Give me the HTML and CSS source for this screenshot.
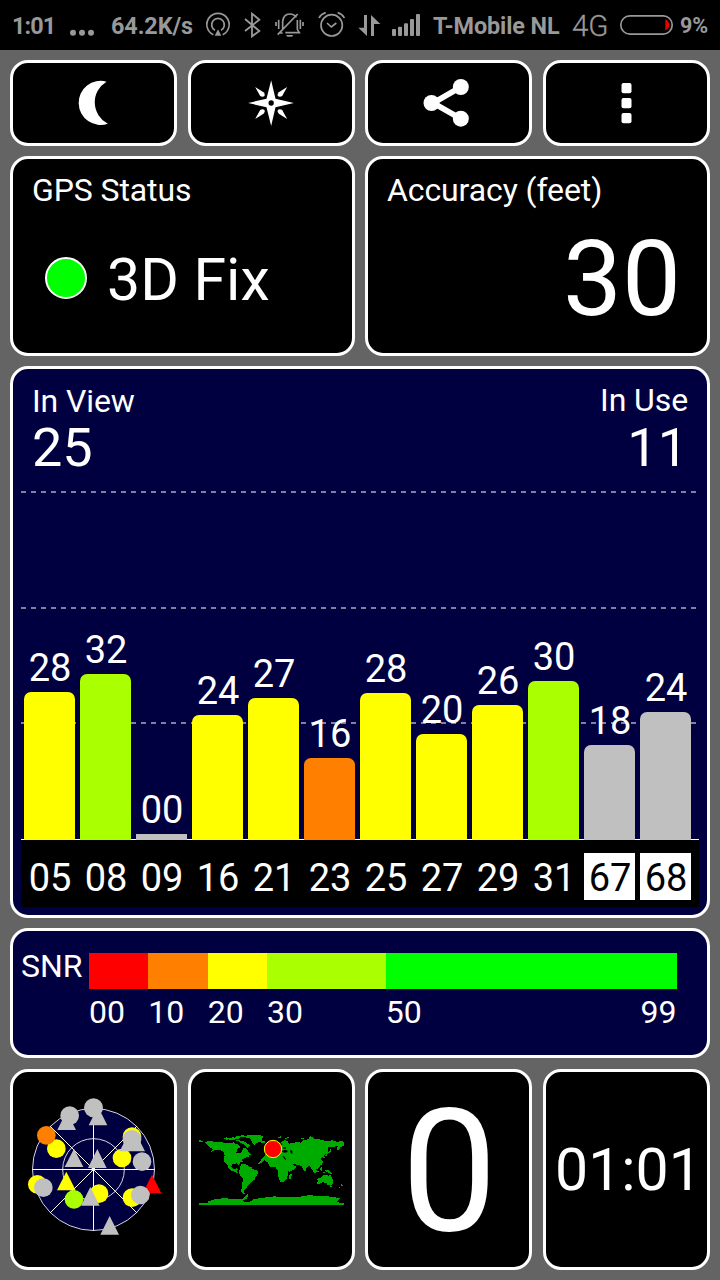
FILE: index.html
```html
<!DOCTYPE html>
<html lang="en">
<head>
<meta charset="utf-8">
<title>GPS Status</title>
<link rel="stylesheet" href="styles.css">
</head>
<body>
<header class="statusbar">
  <span class="sb-clock">1:01</span>
  <svg class="i-dots" viewBox="201 0 90 150"><g fill="#999"><circle cx="219" cy="98" r="9"/><circle cx="246" cy="98" r="9"/><circle cx="273" cy="98" r="9"/></g></svg>
  <span class="sb-rate">64.2K/s</span>
  <svg class="i-sys" viewBox="612 0 690 150">
    <g fill="none" stroke="#999" stroke-width="5">
      <path d="M640 104A33.500 33.500 0 1 1 668 104"/>
      <path d="M645 91A19 19 0 1 1 663 91"/>
      <path d="M735 57L778 93L756 109V41L778 59L735 93" stroke-width="5.500"/>
      <path d="M836 99H848M848 88V64C850 48 857 42 869 42C881 42 886 47 889 52M892 60V88L898 98H856M833 104L893 42"/>
      <path d="M828 66V78M836 59V87M901 59V87M909 66V78"/>
      <circle cx="995" cy="76" r="32"/>
      <path d="M981 69L994 81L1009 69M957 54Q963 42 977 38M1013 38Q1027 42 1033 54"/>
    </g>
    <g fill="#999">
      <path d="M644 107L654 88L664 107Z"/>
      <path d="M858 105H880L876 110H862Z"/>
      <path d="M1092 45H1101V108L1075 83H1092Z"/>
      <path d="M1113 108V45L1141 72H1122V108Z"/>
      <rect x="1176" y="87" width="12" height="21" rx="3"/><rect x="1194" y="80" width="12" height="28" rx="3"/><rect x="1212" y="70" width="12" height="38" rx="3"/><rect x="1230" y="57" width="12" height="51" rx="3"/><rect x="1248" y="42" width="12" height="66" rx="3"/>
    </g>
  </svg>
  <span class="sb-carrier">T-Mobile NL</span>
  <span class="sb-net">4G</span>
  <svg class="i-batt" viewBox="771 0 180 150"><path d="M916 58Q928 64 928 75Q928 86 916 91Z" fill="#e60000"/><rect x="782.500" y="47.500" width="154" height="55" rx="27" fill="none" stroke="#999" stroke-width="5"/></svg>
  <span class="sb-pct">9%</span>
</header>
<main class="board">
  <nav class="row tools">
    <button class="card"><svg class="icon" viewBox="208.500 87 144 144"><path fill="#fff" d="M318 95A66 66 0 1 0 322 221A72 72 0 0 1 318 95Z"/></svg></button>
    <button class="card"><svg class="icon" viewBox="740.500 87 144 144"><g fill="#fff"><path fill-rule="evenodd" d="M813 91L826 146L881 159L826 172L813 228L799 172L744 159L799 146ZM813 151A8 8 0 1 0 813 167A8 8 0 1 0 813 151Z"/><path d="M765 111L790 127Q796 133 793 138Q787 143 780 138Z"/><path d="M861 111L836 127Q830 133 833 138Q839 143 846 138Z"/><path d="M765 207L790 191Q796 185 793 180Q787 175 780 180Z"/><path d="M861 207L836 191Q830 185 833 180Q839 175 846 180Z"/></g></svg></button>
    <button class="card"><svg class="icon" viewBox="193.500 87 144 144"><path d="M301 111L218 159L301 206" fill="none" stroke="#fff" stroke-width="17"/><g fill="#fff"><circle cx="301" cy="111" r="24"/><circle cx="213" cy="159" r="24"/><circle cx="301" cy="206" r="24"/></g></svg></button>
    <button class="card"><svg class="icon" viewBox="724.500 87 144 144"><g fill="#fff"><rect x="783" y="99" width="30" height="31" rx="6"/><rect x="783" y="144" width="30" height="31" rx="6"/><rect x="783" y="189" width="30" height="31" rx="6"/></g></svg></button>
  </nav>
  <section class="row summary">
    <article class="card fix"><h2 class="title">GPS Status</h2><div class="fix-state"><i class="lamp"></i><span>3D Fix</span></div></article>
    <article class="card accuracy"><h2 class="title">Accuracy (feet)</h2><p class="acc-value">30</p></article>
  </section>
  <section class="card navy signals">
    <div class="counts"><div><h2 class="title">In View</h2><p class="count">25</p></div><div class="right"><h2 class="title">In Use</h2><p class="count">11</p></div></div>
    <div class="chart">
      <svg class="grid" viewBox="0 0 678 350"><path d="M0 2H676M0 118H676M0 233H676" stroke="#fff" stroke-opacity=".5" stroke-width="2" stroke-dasharray="5 5"/></svg>
      <div class="bars">
        <div class="col"><span>28</span><i class="yellow" style="height:148px"></i></div>
        <div class="col"><span>32</span><i class="lime" style="height:166px"></i></div>
        <div class="col"><span>00</span><i class="grey flat" style="height:6px"></i></div>
        <div class="col"><span>24</span><i class="yellow" style="height:125px"></i></div>
        <div class="col"><span>27</span><i class="yellow" style="height:142px"></i></div>
        <div class="col"><span>16</span><i class="orange" style="height:82px"></i></div>
        <div class="col"><span>28</span><i class="yellow" style="height:147px"></i></div>
        <div class="col"><span>20</span><i class="yellow" style="height:106px"></i></div>
        <div class="col"><span>26</span><i class="yellow" style="height:135px"></i></div>
        <div class="col"><span>30</span><i class="lime" style="height:159px"></i></div>
        <div class="col"><span>18</span><i class="grey" style="height:95px"></i></div>
        <div class="col"><span>24</span><i class="grey" style="height:128px"></i></div>
      </div>
    </div>
    <div class="ids"><span>05</span><span>08</span><span>09</span><span>16</span><span>21</span><span>23</span><span>25</span><span>27</span><span>29</span><span>31</span><span class="glonass">67</span><span class="glonass">68</span></div>
  </section>
  <section class="card navy snr">
    <span class="snr-name">SNR</span>
    <div class="scale">
      <div class="strip"><i class="red s10"></i><i class="orange s10"></i><i class="yellow s10"></i><i class="lime s20"></i><i class="green s49"></i></div>
      <div class="ticks"><span class="s10">00</span><span class="s10">10</span><span class="s10">20</span><span class="s20">30</span><span class="s49 last"><b>50</b><b>99</b></span></div>
    </div>
  </section>
  <section class="row bottom">
    <article class="card">
      <svg class="sky" viewBox="9 36 483 585">
        <circle cx="250.500" cy="328.500" r="183" fill="#000040"/>
        <g fill="none" stroke="#fff" stroke-width="3"><circle cx="250.500" cy="328.500" r="183" stroke="#d5d5e0"/><circle cx="250.500" cy="328.500" r="92.500" stroke="#d5d5e0"/><path d="M67 328.500H434M250.500 146V512"/><path d="M121 199L380 458M121 458L380 199" shape-rendering="crispEdges"/></g>
        <rect x="245" y="323" width="10" height="10" fill="#fff"/>
        <g fill="#ff0"><circle cx="139" cy="266" r="28"/><circle cx="366" cy="230" r="28"/><circle cx="336" cy="294" r="28"/><circle cx="82" cy="373" r="28"/><circle cx="267" cy="401" r="28"/><circle cx="366" cy="413" r="28"/><path d="M169 335L197 391H141Z"/></g>
        <circle cx="109" cy="226" r="28" fill="#ff8000"/><circle cx="192" cy="418" r="28" fill="#af0"/><path d="M426 344L454 400H398Z" fill="red"/>
        <g fill="#c0c0c0"><circle cx="179" cy="167" r="28"/><path d="M170 154L198 210H142Z"/><circle cx="250.500" cy="143" r="28.500"/><path d="M264 140L292 196H236Z"/><circle cx="366" cy="238" r="28"/><path d="M357 218L385 274H329ZM377 218L405 274H349Z"/><circle cx="396" cy="305" r="28"/><path d="M192 266L220 321H164ZM262 267L290 324H234ZM241 381L269 437H213ZM299 468L327 524H271Z"/><circle cx="100" cy="383" r="28"/><circle cx="391" cy="405" r="28"/></g>
      </svg>
    </article>
    <article class="card world">
      <svg class="map" viewBox="39 42 435 216">
        <g fill="#00ab00" shape-rendering="crispEdges">
          <path d="M39 60h5v4h8v3h-13zM56 66l12-3 28 3 12 1 10 3 26-3 6 5 9 3 3 7-9 6-2 10 10 2 7-6 3-9 8-2 5 6 4 8 7 7-12 4-6 6-9 4-2 7-5 4-1 8-8-7-13 2-3 8 6 7 7-1 4-5 2 6-2 8 5 4 8 2-5 1-13-6-13-4-7-8-4-9-8-8-2-9 2-12-4-11-11-5-11-1-14 6 5-8-8-3z"/>
          <path d="M112 56l10-4 8 4-7 4zM127 54l16-2 9 5-12 4-12-1zM147 50l19-4 14 1-5 3-12 2-7 5-9-2zM160 64l12-2 10 8 10 6-6 8-7-4-4-7-13-5zM151 60h10v4h-10z"/>
          <path d="M169 50l16-4 35-1 12 3-4 8-2 8-13 4-8 6-4-3-9-16-10-2z"/>
          <path d="M225 64l11-1 3 4-7 2-6-1zM155 119l10 2 8 4-6 1-11-5zM180 104l8 2 2 4-7 1z"/>
          <path d="M164 135l5-4 10 1 10 7 8 3 3 5 10 3 6 5-2 9-5 6-3 10-8 3-6 9-8 7-5 8-4 3v9l4 4-9-2-5-7 3-15 3-25-7-5-6-11 2-7z"/>
          <path d="M236 79h7l3 12-10 2zM242 98l18-8 3-11 12-2 9-9 13-9 10 6 1 6 17-2 7-4 12 3 9-8 14-2 7-5 20 5 16 1 6 4 25-2 10 4 17-1 13 4 9-3 6-3v8l-9 2 3 5-15-1-12 5-4 8-6 3-1-8 5-7-18 4-14-1 2 12-6 10-8 4 3 7-2 5-4-7-7 5 8 8-3 9-9 6-6 4-6-1 5 10-5 8-6-7-2-13-7-3-10 5-4 11-5-3-6-13-16-2-5-4-6 1 11 9-8 9-14 6-9-17 4-9-8-1-8-4-9-1-7-7-8 8-9-1-13 2-8-6-7 10-10 1z"/>
          <path d="M246 112l10-5 14-2 5 6 11 2 10-2 6 11 7 14 10-1-3 10-10 11-1 11-5 13-8 6-8 2-5-11-4-16 2-8-6-6-1-6-14 1-8-7-2-11z"/>
          <path d="M310 166l7-5 1 5-6 14-4-4zM349 139l4 4-3 3-3-4zM371 136l7 4 8 13-3 2-8-9zM387 153l15 2-5 2-11-2zM388 138l10-5 3 6-5 9-8-2zM402 143l8-2-2 6 2 6-6-2zM401 121l5 5 4 10-5-5zM417 149l10 1 10 9 1 3-10-3-10-6zM410 157h8v2h-8z"/>
          <path d="M394 177l9-4 8-7 11-2 6 6 4-8 6 12 4 7-1 11-7 5-9-2-5-7-10-1-12 6-5-2 2-7zM432 199h6l-3 4zM465 191l6 5-7 5zM457 203l6-2-4 5zM418 106l4-8 7-3 5-9h3l-4 12-8 3-5 8zM293 57l7-4 4 2-7 4zM300 52l10-2-2 4zM366 54l8-6 9 6-7 3zM275 52l8-3 4 3-7 3zM344 56l8-2 2 3-9 1z"/>
          <path d="M39 249H68L66 244L80 240L93 236L120 235L150 238L171 236L179 227L186 222L184 235L172 240L173 246L191 246L200 239L217 235L240 232L267 229L289 232L318 231L342 230L373 225L396 229L424 229L445 231L461 235L452 245L461 249H474V255H39Z"/>
        </g>
        <g fill="#000"><path d="M291 82h9v4h-9zM286 94l11-5 8 3-1 5-10 1zM312 90l7 3v10l-5-5zM289 108l7 2 5 11-5-3zM274 79l12-10 3 5-8 5z"/></g>
        <circle cx="261" cy="87" r="26" fill="red" stroke="#ff0" stroke-width="3"/>
      </svg>
    </article>
    <article class="card speed">0</article>
    <article class="card time">01:01</article>
  </section>
</main>
</body>
</html>
```

FILE: styles.css
```css
* { box-sizing: border-box; }
body { margin: 0; width: 720px; height: 1280px; overflow: hidden; background: #646464; color: #fff; font-family: Roboto, "Noto Sans", sans-serif; }
h2, p { margin: 0; font-weight: 400; }
i, b { font-style: normal; font-weight: 400; }
svg { display: block; flex: none; }

.statusbar { display: flex; height: 50px; padding-left: 12px; background: #000; color: #999; font-size: 23.4px; font-weight: 700; line-height: 52px; white-space: nowrap; }
.statusbar svg { height: 50px; }
.sb-clock { width: 55px; letter-spacing: -.9px; }
.i-dots { width: 30px; margin-right: 14px; }
.sb-rate { width: 93px; letter-spacing: -.1px; }
.i-sys { width: 230px; margin-right: -1px; }
.sb-carrier { width: 139px; letter-spacing: -.1px; }
.sb-net { width: 45px; font-size: 29.5px; font-weight: 300; -webkit-text-stroke: .3px #999; }
.i-batt { width: 60px; }
.sb-pct { margin-left: 3px; font-size: 21.5px; }

.board { display: flex; flex-direction: column; padding: 10px 10px 10px 10px; }
.row { display: grid; grid-template-columns: repeat(4, 167px); justify-content: space-between; }
.card { min-width: 0; border: 3px solid #fff; border-radius: 18px; background: #000; color: #fff; overflow: hidden; }
.navy { background: #000040; }
.title { font-size: 32px; line-height: 38px; letter-spacing: -.1px; }

.tools { height: 86px; margin-bottom: 10px; }
.tools .card { display: flex; align-items: center; justify-content: center; padding: 0; }
.icon { width: 48px; height: 48px; overflow: visible; }

.summary { grid-template-columns: 345px 345px; height: 200px; margin-bottom: 10px; }
.summary .card { padding: 12px 19px; }
.fix-state { display: flex; align-items: center; gap: 20px; margin-top: 36px; padding-left: 13px; font-size: 59px; line-height: 70px; }
.lamp { width: 42px; height: 42px; margin-bottom: 4px; border: 2px solid #fff; border-radius: 50%; background: #0f0; }
.acc-value { margin-top: 19px; padding-right: 7px; font-size: 105px; line-height: 104px; text-align: right; }

.signals { display: flex; flex-direction: column; height: 552px; margin-bottom: 10px; padding: 13px 8px 0; }
.counts { display: flex; justify-content: space-between; height: 108px; padding: 0 11px; }
.right { text-align: right; }
.right .title { height: 38px; line-height: 36px; }
.count { font-size: 54px; line-height: 56px; }
.chart { display: grid; height: 350px; border-bottom: 1px solid #fff; }
.grid, .bars { grid-area: 1 / 1; }
.grid { width: 678px; height: 350px; }
.bars { display: flex; align-items: flex-end; gap: 5px; padding-left: 3px; }
.col { display: flex; flex-direction: column; align-items: center; width: 51px; font-size: 38px; line-height: 38px; }
.col span { margin-bottom: 5px; padding-left: 1px; }
.col i { width: 51px; border-radius: 7px 7px 0 0; }
.col .flat { border-radius: 0; }
.ids { display: flex; gap: 5px; height: 67px; padding: 13px 0 7px 3px; background: #000; font-size: 38px; line-height: 51px; text-align: center; }
.ids span { width: 51px; height: 47px; padding-left: 1px; }
.glonass { background: #fff; color: #000; }

.red { background: #f00; }
.orange { background: #ff8000; }
.yellow { background: #ff0; }
.lime { background: #af0; }
.green { background: #0f0; }
.grey { background: #c0c0c0; }

.snr { display: flex; height: 130px; margin-bottom: 11px; padding: 22px 30.5px 0 8px; font-size: 32px; }
.snr-name { width: 68px; line-height: 26px; }
.scale { flex: 1; }
.strip { display: flex; height: 36px; }
.ticks { display: flex; margin-top: 5px; line-height: 36px; }
.s10 { flex: 10 0 0; min-width: 0; }
.s20 { flex: 20 0 0; min-width: 0; }
.s49 { flex: 49 0 0; min-width: 0; }
.last { display: flex; justify-content: space-between; }

.bottom { height: 201px; }
.sky { width: 161px; height: 195px; }
.world { display: flex; justify-content: center; padding-top: 62px; }
.map { width: 145px; height: 72px; }
.speed, .time { display: flex; align-items: center; justify-content: center; }
.speed { padding: 3px 0 0 1px; font-size: 171px; line-height: 195px; }
.time { padding-left: 4px; font-size: 59px; line-height: 195px; }
```
